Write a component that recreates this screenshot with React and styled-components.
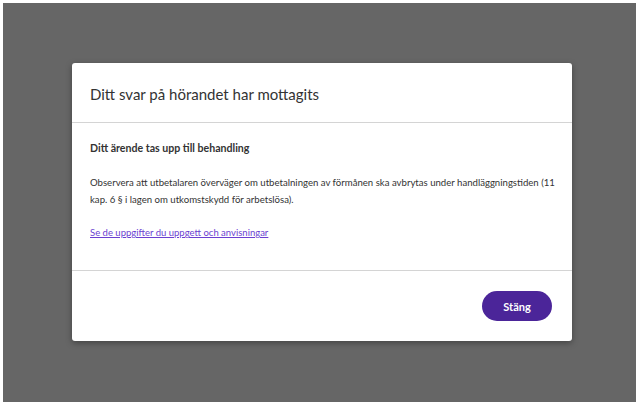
import React from 'react';
import styled, { createGlobalStyle } from 'styled-components';

const GlobalStyle = createGlobalStyle`
    html, body {
        margin: 0;
        padding: 0;
        background: #ffffff;
    }
    body {
        font-family: Lato, "Open Sans", Arial, sans-serif;
        color: #333333;
    }
    #root {
        padding: 3px;
    }
`;

export default function App() {
    return (
        <>
            <GlobalStyle />
            <Overlay>
                <Modal role="dialog" aria-labelledby="modal-title">
                    <Header>
                        <Title id="modal-title">Ditt svar på hörandet har mottagits</Title>
                    </Header>
                    <Body>
                        <Lead>Ditt ärende tas upp till behandling</Lead>
                        <Text>
                            Observera att utbetalaren överväger om utbetalningen av förmånen ska avbrytas under handläggningstiden (11 kap. 6 § i lagen om utkomstskydd för arbetslösa).
                        </Text>
                        <Link href="#">Se de uppgifter du uppgett och anvisningar</Link>
                    </Body>
                    <Footer>
                        <Button type="button">Stäng</Button>
                    </Footer>
                </Modal>
            </Overlay>
        </>
    );
}

const Overlay = styled.div`
    box-sizing: border-box;
    height: 399px;
    background: #666666;
    display: flex;
    align-items: flex-start;
    padding: 60px 0 0 69px;
`;

const Modal = styled.div`
    width: 500px;
    background: #ffffff;
    border-radius: 3px;
    box-shadow: 0 2px 6px rgba(0, 0, 0, 0.35);
    display: flex;
    flex-direction: column;
`;

const Header = styled.div`
    height: 59px;
    padding: 0 18px;
    display: flex;
    align-items: center;
    border-bottom: 1px solid #d4d4d4;
`;

const Title = styled.h2`
    margin: 0;
    padding-top: 2px;
    font-size: 15px;
    font-weight: 400;
    color: #333333;
`;

const Body = styled.div`
    height: 148px;
    box-sizing: border-box;
    padding: 17px 8px 0 18px;
    display: flex;
    flex-direction: column;
    align-items: flex-start;
    border-bottom: 1px solid #d4d4d4;
`;

const Lead = styled.p`
    margin: 0 0 18px;
    font-size: 10.6px;
    font-weight: 700;
    line-height: 16px;
    color: #333333;
`;

const Text = styled.p`
    margin: 0 0 16px;
    font-size: 9.6px;
    line-height: 17px;
    color: #333333;
`;

const Link = styled.a`
    font-size: 9.5px;
    line-height: 17px;
    color: #6b3fd1;
    text-decoration: underline;
`;

const Footer = styled.div`
    height: 70px;
    box-sizing: border-box;
    padding: 0 20px;
    display: flex;
    align-items: center;
    justify-content: flex-end;
`;

const Button = styled.button`
    width: 70px;
    height: 30px;
    border: none;
    border-radius: 15px;
    background: #4b2599;
    color: #ffffff;
    font-family: Lato, "Open Sans", Arial, sans-serif;
    font-size: 11px;
    font-weight: 700;
    cursor: pointer;
`;
